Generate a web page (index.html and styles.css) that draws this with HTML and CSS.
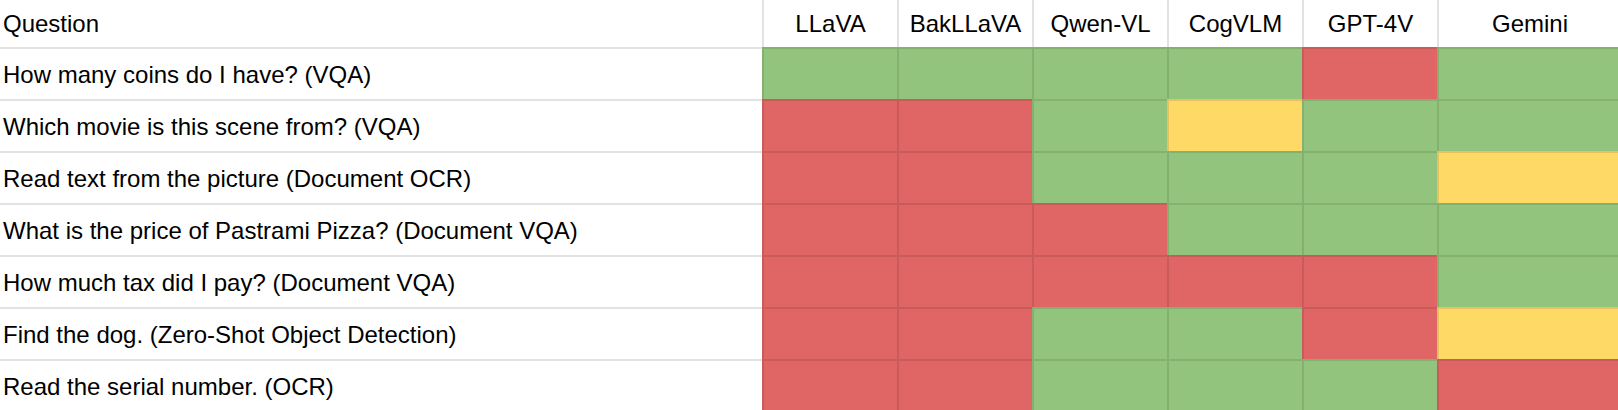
FILE: index.html
```html
<!DOCTYPE html>
<html lang="en">
<head>
<meta charset="utf-8">
<title>Model comparison</title>
<link rel="stylesheet" href="styles.css">
</head>
<body>
<div class="sheet">
  <div class="cell head q">Question</div>
  <div class="cell head m">LLaVA</div>
  <div class="cell head m">BakLLaVA</div>
  <div class="cell head m">Qwen-VL</div>
  <div class="cell head m">CogVLM</div>
  <div class="cell head m">GPT-4V</div>
  <div class="cell head m">Gemini</div>

  <div class="cell row q">How many coins do I have? (VQA)</div>
  <div class="cell row g"></div><div class="cell row g"></div><div class="cell row g"></div><div class="cell row g"></div><div class="cell row r"></div><div class="cell row g"></div>

  <div class="cell row q">Which movie is this scene from? (VQA)</div>
  <div class="cell row r"></div><div class="cell row r"></div><div class="cell row g"></div><div class="cell row y"></div><div class="cell row g"></div><div class="cell row g"></div>

  <div class="cell row q">Read text from the picture (Document OCR)</div>
  <div class="cell row r"></div><div class="cell row r"></div><div class="cell row g"></div><div class="cell row g"></div><div class="cell row g"></div><div class="cell row y"></div>

  <div class="cell row q">What is the price of Pastrami Pizza? (Document VQA)</div>
  <div class="cell row r"></div><div class="cell row r"></div><div class="cell row r"></div><div class="cell row g"></div><div class="cell row g"></div><div class="cell row g"></div>

  <div class="cell row q">How much tax did I pay? (Document VQA)</div>
  <div class="cell row r"></div><div class="cell row r"></div><div class="cell row r"></div><div class="cell row r"></div><div class="cell row r"></div><div class="cell row g"></div>

  <div class="cell row q">Find the dog. (Zero-Shot Object Detection)</div>
  <div class="cell row r"></div><div class="cell row r"></div><div class="cell row g"></div><div class="cell row g"></div><div class="cell row r"></div><div class="cell row y"></div>

  <div class="cell row q">Read the serial number. (OCR)</div>
  <div class="cell row r"></div><div class="cell row r"></div><div class="cell row g"></div><div class="cell row g"></div><div class="cell row g"></div><div class="cell row r"></div>
</div>
</body>
</html>
```
FILE: styles.css
```css
html, body {
  margin: 0;
  padding: 0;
  background: #ffffff;
  overflow: hidden;
}

.sheet {
  display: grid;
  grid-template-columns: 762px 135px 135px 135px 135px 135px 184px;
  grid-template-rows: 47px repeat(7, 52px);
  width: 1621px;
  font-family: "Liberation Sans", Arial, sans-serif;
  font-size: 24px;
  color: #000;
}

.cell {
  box-sizing: border-box;
  display: flex;
  align-items: center;
  white-space: nowrap;
  overflow: hidden;
}

.head.q {
  padding-left: 3px;
}

.head.m {
  justify-content: center;
  border-left: 2px solid #e2e2e2;
}

.row {
  border-top: 2px solid #e2e2e2;
}

.row.q {
  padding-left: 3px;
  padding-top: 1px;
}

.g, .r, .y {
  border-left: 2px solid rgba(0, 0, 0, 0.1);
  border-top: 2px solid rgba(0, 0, 0, 0.1);
}

.g { background: #93c47d; }
.r { background: #e06666; }
.y { background: #ffd966; }
```
